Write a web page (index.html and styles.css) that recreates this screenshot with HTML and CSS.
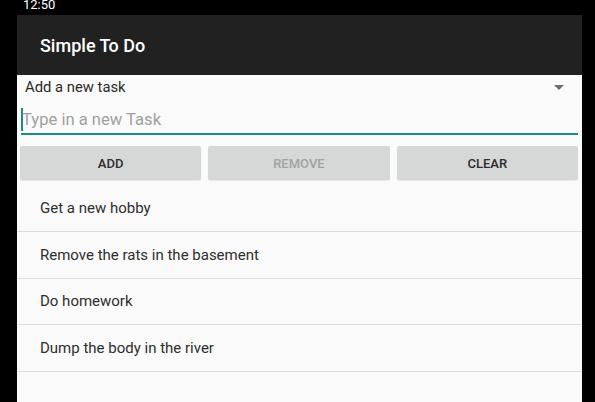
FILE: index.html
```html
<!DOCTYPE html>
<html>
<head>
<meta charset="utf-8">
<link rel="stylesheet" href="styles.css">
</head>
<body>
<div class="status"><span class="time">12:50</span></div>
<div class="app">
  <div class="toolbar">Simple To Do</div>
  <div class="spinner">
    <span class="spinner-label">Add a new task</span>
    <span class="arrow"></span>
  </div>
  <div class="edit">
    <span class="cursor"></span><span class="placeholder">Type in a new Task</span>
  </div>
  <div class="buttons">
    <button class="btn">ADD</button>
    <button class="btn disabled">REMOVE</button>
    <button class="btn">CLEAR</button>
  </div>
  <ul class="list">
    <li class="item">Get a new hobby</li>
    <li class="item">Remove the rats in the basement</li>
    <li class="item">Do homework</li>
    <li class="item">Dump the body in the river</li>
  </ul>
</div>
</body>
</html>
```

FILE: styles.css
```css
* { box-sizing: border-box; }
html, body { margin: 0; padding: 0; }
body {
  background: #000;
  font-family: Roboto, "Liberation Sans", sans-serif;
  width: 595px;
  height: 402px;
  overflow: hidden;
}
.status {
  height: 15px;
  overflow: hidden;
  padding-left: 23px;
}
.time {
  display: block;
  color: #fff;
  font-size: 13px;
  line-height: 13px;
  margin-top: -2px;
}
.app {
  margin: 0 13px 0 17px;
  background: #fafafa;
  height: 387px;
}
.toolbar {
  height: 60px;
  background: #212121;
  color: #fff;
  font-family: "Roboto Medium", Roboto, "Liberation Sans", sans-serif;
  font-size: 18px;
  font-weight: 500;
  display: flex;
  align-items: center;
  padding-left: 23px;
}
.spinner {
  height: 24px;
  display: flex;
  align-items: center;
  justify-content: space-between;
  padding: 0 18px 0 8px;
}
.spinner-label {
  font-size: 14.8px;
  color: #2a2a2a;
}
.arrow {
  width: 0;
  height: 0;
  border-left: 5px solid transparent;
  border-right: 5px solid transparent;
  border-top: 5px solid #6f6f6f;
}
.edit {
  margin: 0 4px 0 4px;
  height: 36px;
  border-bottom: 2px solid #1c8c80;
  display: flex;
  align-items: center;
  padding-top: 6px;
}
.cursor {
  width: 2px;
  height: 23px;
  background: #1c8c80;
}
.placeholder {
  font-size: 16.6px;
  color: #a0a0a0;
  margin-left: -1px;
}
.buttons {
  display: flex;
  gap: 7px;
  padding: 0 4px 0 3px;
  margin-top: 11px;
}
.btn {
  flex: 1;
  height: 34px;
  border: none;
  border-radius: 2px;
  background: #d6d7d7;
  box-shadow: 0 1px 1px rgba(0,0,0,0.08);
  font-family: "Roboto Medium", Roboto, "Liberation Sans", sans-serif;
  font-size: 13px;
  font-weight: 500;
  color: #2e2e2e;
  padding: 0;
}
.btn.disabled { color: #a2a2a2; }
.list {
  list-style: none;
  margin: 5.5px 0 0 0;
  padding: 0;
}
.item {
  height: 46.5px;
  border-bottom: 1px solid #dcdcdc;
  display: flex;
  align-items: center;
  padding-left: 23px;
  font-size: 15px;
  color: #2e2e2e;
}
```
